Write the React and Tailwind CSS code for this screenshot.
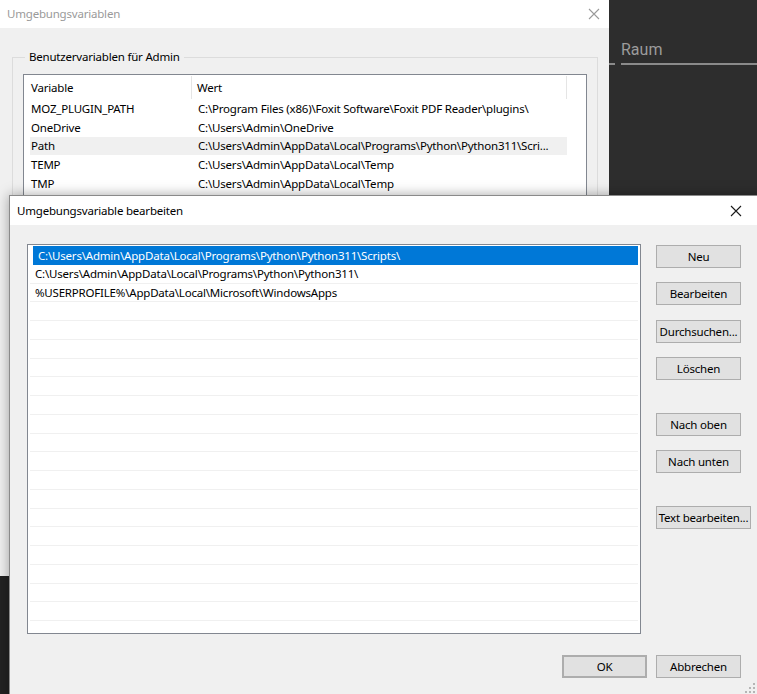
import React from 'react';

const font = { fontFamily: '"Noto Sans", "Liberation Sans", sans-serif' };

const userVars = [
  ['MOZ_PLUGIN_PATH', 'C:\\Program Files (x86)\\Foxit Software\\Foxit PDF Reader\\plugins\\'],
  ['OneDrive', 'C:\\Users\\Admin\\OneDrive'],
  ['Path', 'C:\\Users\\Admin\\AppData\\Local\\Programs\\Python\\Python311\\Scri...'],
  ['TEMP', 'C:\\Users\\Admin\\AppData\\Local\\Temp'],
  ['TMP', 'C:\\Users\\Admin\\AppData\\Local\\Temp'],
];

const pathEntries = [
  'C:\\Users\\Admin\\AppData\\Local\\Programs\\Python\\Python311\\Scripts\\',
  'C:\\Users\\Admin\\AppData\\Local\\Programs\\Python\\Python311\\',
  '%USERPROFILE%\\AppData\\Local\\Microsoft\\WindowsApps',
];

const CloseIcon = ({ color }) => (
  <svg width="12" height="12" viewBox="0 0 12 12">
    <path d="M1 1 L11 11 M11 1 L1 11" stroke={color} strokeWidth="1.1" />
  </svg>
);

const Button = ({ children, className = '' }) => (
  <button
    className={`h-[23px] w-[85px] shrink-0 bg-[#e1e1e1] border border-[#adadad] text-[11.5px] tracking-[-0.2px] text-black leading-none flex items-center justify-center whitespace-nowrap ${className}`}
  >
    {children}
  </button>
);

const BackWindow = () => (
  <div className="absolute left-0 top-0 w-[609px] h-[576px] bg-[#f0f0f0] flex flex-col text-[11.5px] tracking-[-0.2px]">
    <div className="h-[28px] bg-white flex items-center justify-between pl-[7px] pr-[9px]">
      <span className="text-[#9a9a9a]">Umgebungsvariablen</span>
      <CloseIcon color="#9a9a9a" />
    </div>
    <fieldset className="ml-[12px] mt-[21px] w-[586px] h-[200px] border border-[#dcdcdc] px-[10px] pt-[9px]">
      <legend className="ml-[2px] px-[4px] text-black leading-[16px]">Benutzervariablen für Admin</legend>
      <div className="h-[180px] w-[564px] border border-[#828790] bg-white pt-px">
        <div className="flex h-[23px] text-black">
          <div className="w-[168px] shrink-0 pl-[7px] flex items-center border-r border-[#e5e5e5]">Variable</div>
          <div className="w-[375px] shrink-0 pl-[5px] flex items-center border-r border-[#e5e5e5]">Wert</div>
        </div>
        <div className="pl-[6px]">
          {userVars.map(([name, value]) => (
            <div
              key={name}
              className={`flex h-[18.75px] items-center w-[537px] text-black ${name === 'Path' ? 'bg-[#f0f0f0]' : ''}`}
            >
              <span className="w-[168px] shrink-0 pl-[1px]">{name}</span>
              <span className="whitespace-nowrap">{value}</span>
            </div>
          ))}
        </div>
      </div>
    </fieldset>
  </div>
);

const EditDialog = () => (
  <div className="absolute left-[9px] top-[195px] w-[760px] h-[510px] border border-[#8a8a8a] bg-[#f0f0f0] flex flex-col shadow-[0_0_12px_rgba(0,0,0,0.35)] text-[11.5px] tracking-[-0.2px]">
    <div className="h-[29px] bg-white flex items-center pl-[7px] pr-[26px] justify-between">
      <span className="text-black">Umgebungsvariable bearbeiten</span>
      <CloseIcon color="#1a1a1a" />
    </div>
    <div className="pl-[17px] pt-[19px] w-[731px]">
      <div className="flex">
        <div className="w-[614px] h-[390px] shrink-0 border border-[#828790] bg-white overflow-hidden pt-px px-[2px]">
          {Array.from({ length: 21 }).map((_, i) => {
            const selected = i === 0;
            return (
              <div
                key={i}
                className={`h-[18.75px] flex items-center pl-[5px] whitespace-nowrap ${
                  selected ? 'bg-[#0078d7] text-white ml-[3px]' : 'text-black border-b border-[#f0f0f0]'
                }`}
              >
                {pathEntries[i] || ''}
              </div>
            );
          })}
        </div>
        <div className="ml-[15px] flex flex-col items-start pt-px shrink-0">
          <Button>Neu</Button>
          <Button className="mt-[14px]">Bearbeiten</Button>
          <Button className="mt-[15px]">Durchsuchen...</Button>
          <Button className="mt-[14px]">Löschen</Button>
          <Button className="mt-[33px]">Nach oben</Button>
          <Button className="mt-[14px]">Nach unten</Button>
          <Button className="mt-[33px] w-[95px]">Text bearbeiten...</Button>
        </div>
      </div>
      <div className="flex justify-end gap-[9px] mt-[21px]">
        <Button className="border-2 border-[#0078d7]">OK</Button>
        <Button>Abbrechen</Button>
      </div>
    </div>
  </div>
);

const Grip = () => (
  <svg className="absolute left-[744px] top-[682px]" width="12" height="12" viewBox="0 0 12 12">
    {[[9, 1], [9, 5], [5, 5], [9, 9], [5, 9], [1, 9]].map(([x, y]) => (
      <rect key={`${x}-${y}`} x={x} y={y} width="2" height="2" fill="#b5b5b5" />
    ))}
  </svg>
);

export default function App() {
  return (
    <div className="relative w-[757px] h-[694px] overflow-hidden bg-[#2b2b2b]" style={font}>
      <div className="absolute left-[609px] top-0 w-[148px] h-[576px] bg-[#2d2d2d]">
        <div className="pl-[12px] pt-[38px] text-[16px] text-[#9b9b9b] leading-[24px]" style={{ fontFamily: 'Roboto, sans-serif' }}>
          Raum
        </div>
        <div className="flex mt-[1px] gap-[6px]">
          <div className="w-[6px] h-[2px] bg-[#8a8a8a]" />
          <div className="flex-1 h-[2px] bg-[#8a8a8a]" />
        </div>
      </div>
      <div className="absolute left-0 top-[576px] w-[9px] h-[118px] bg-[#222222]" />
      <BackWindow />
      <EditDialog />
      <Grip />
    </div>
  );
}
